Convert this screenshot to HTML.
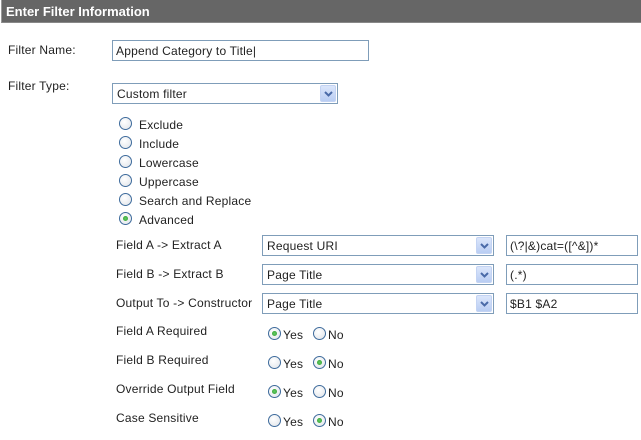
<!DOCTYPE html>
<html><head><meta charset="utf-8">
<style>
*{margin:0;padding:0;box-sizing:border-box}
body{width:641px;height:440px;background:#fff;position:relative;overflow:hidden;font-family:"Liberation Sans",Arial,sans-serif;font-size:12px;color:#222;letter-spacing:0.2px}
.a{position:absolute;white-space:nowrap}
.hdr{left:1px;top:0;width:640px;height:23px;background:#666;border-left:1px solid #999;border-bottom:1px solid #888;color:#fff;font-weight:bold;font-size:13px;padding:4px 0 0 4px;letter-spacing:0}
.inp{position:absolute;border:1px solid #7f9db9;background:#fff;height:21px;padding:3px 0 0 3px;font-size:12px;white-space:nowrap}
.sel{position:absolute;border:1px solid #7f9db9;background:#fff;height:21px;padding:3px 0 0 4px;font-size:12px}
.btn{position:absolute;right:1px;top:1px;width:16px;height:17px;background:linear-gradient(#dbe6fb,#b9cdf3);border:1px solid #c3d3f3;border-radius:2px}
.btn svg{position:absolute;left:3px;top:5px}
.r{position:absolute;width:13px;height:13px;border-radius:50%;border:1px solid #3e6b9c;background:radial-gradient(circle at 40% 35%,#fff,#dfe3e8)}
.r.on::after{content:"";position:absolute;left:3px;top:3px;width:5px;height:5px;border-radius:50%;background:radial-gradient(#6c6,#2a9a2a)}
</style></head><body>
<div class="a hdr">Enter Filter Information</div>

<div class="a" style="left:8px;top:43px">Filter Name:</div>
<div class="inp" style="left:112px;top:40px;width:257px">Append Category to Title|</div>

<div class="a" style="left:8px;top:79px">Filter Type:</div>
<div class="sel" style="left:112px;top:83px;width:226px;height:21px">Custom filter<div class="btn"><svg width="9" height="6"><path d="M1 1 L4.5 4.5 L8 1" stroke="#4a6aa8" stroke-width="2" fill="none"/></svg></div></div>

<div class="r" style="left:119px;top:117px"></div><div class="a" style="left:139px;top:118px">Exclude</div>
<div class="r" style="left:119px;top:136px"></div><div class="a" style="left:139px;top:137px">Include</div>
<div class="r" style="left:119px;top:155px"></div><div class="a" style="left:139px;top:156px">Lowercase</div>
<div class="r" style="left:119px;top:174px"></div><div class="a" style="left:139px;top:175px">Uppercase</div>
<div class="r" style="left:119px;top:193px"></div><div class="a" style="left:139px;top:194px">Search and Replace</div>
<div class="r on" style="left:119px;top:212px"></div><div class="a" style="left:139px;top:213px">Advanced</div>

<div class="a" style="left:116px;top:238px">Field A -&gt; Extract A</div>
<div class="sel" style="left:262px;top:235px;width:232px">Request URI<div class="btn"><svg width="9" height="6"><path d="M1 1 L4.5 4.5 L8 1" stroke="#4a6aa8" stroke-width="2" fill="none"/></svg></div></div>
<div class="inp" style="left:506px;top:235px;width:132px">(\?|&amp;)cat=([^&amp;])*</div>

<div class="a" style="left:116px;top:267px">Field B -&gt; Extract B</div>
<div class="sel" style="left:262px;top:264px;width:232px">Page Title<div class="btn"><svg width="9" height="6"><path d="M1 1 L4.5 4.5 L8 1" stroke="#4a6aa8" stroke-width="2" fill="none"/></svg></div></div>
<div class="inp" style="left:506px;top:264px;width:132px">(.*)</div>

<div class="a" style="left:116px;top:296px">Output To -&gt; Constructor</div>
<div class="sel" style="left:262px;top:293px;width:232px">Page Title<div class="btn"><svg width="9" height="6"><path d="M1 1 L4.5 4.5 L8 1" stroke="#4a6aa8" stroke-width="2" fill="none"/></svg></div></div>
<div class="inp" style="left:506px;top:293px;width:132px">$B1 $A2</div>

<div class="a" style="left:116px;top:324px">Field A Required</div>
<div class="r on" style="left:268px;top:327px"></div><div class="a" style="left:283px;top:328px">Yes</div>
<div class="r" style="left:313px;top:327px"></div><div class="a" style="left:328px;top:328px">No</div>

<div class="a" style="left:116px;top:353px">Field B Required</div>
<div class="r" style="left:268px;top:356px"></div><div class="a" style="left:283px;top:357px">Yes</div>
<div class="r on" style="left:313px;top:356px"></div><div class="a" style="left:328px;top:357px">No</div>

<div class="a" style="left:116px;top:382px">Override Output Field</div>
<div class="r on" style="left:268px;top:385px"></div><div class="a" style="left:283px;top:386px">Yes</div>
<div class="r" style="left:313px;top:385px"></div><div class="a" style="left:328px;top:386px">No</div>

<div class="a" style="left:116px;top:411px">Case Sensitive</div>
<div class="r" style="left:268px;top:414px"></div><div class="a" style="left:283px;top:415px">Yes</div>
<div class="r on" style="left:313px;top:414px"></div><div class="a" style="left:328px;top:415px">No</div>
</body></html>
